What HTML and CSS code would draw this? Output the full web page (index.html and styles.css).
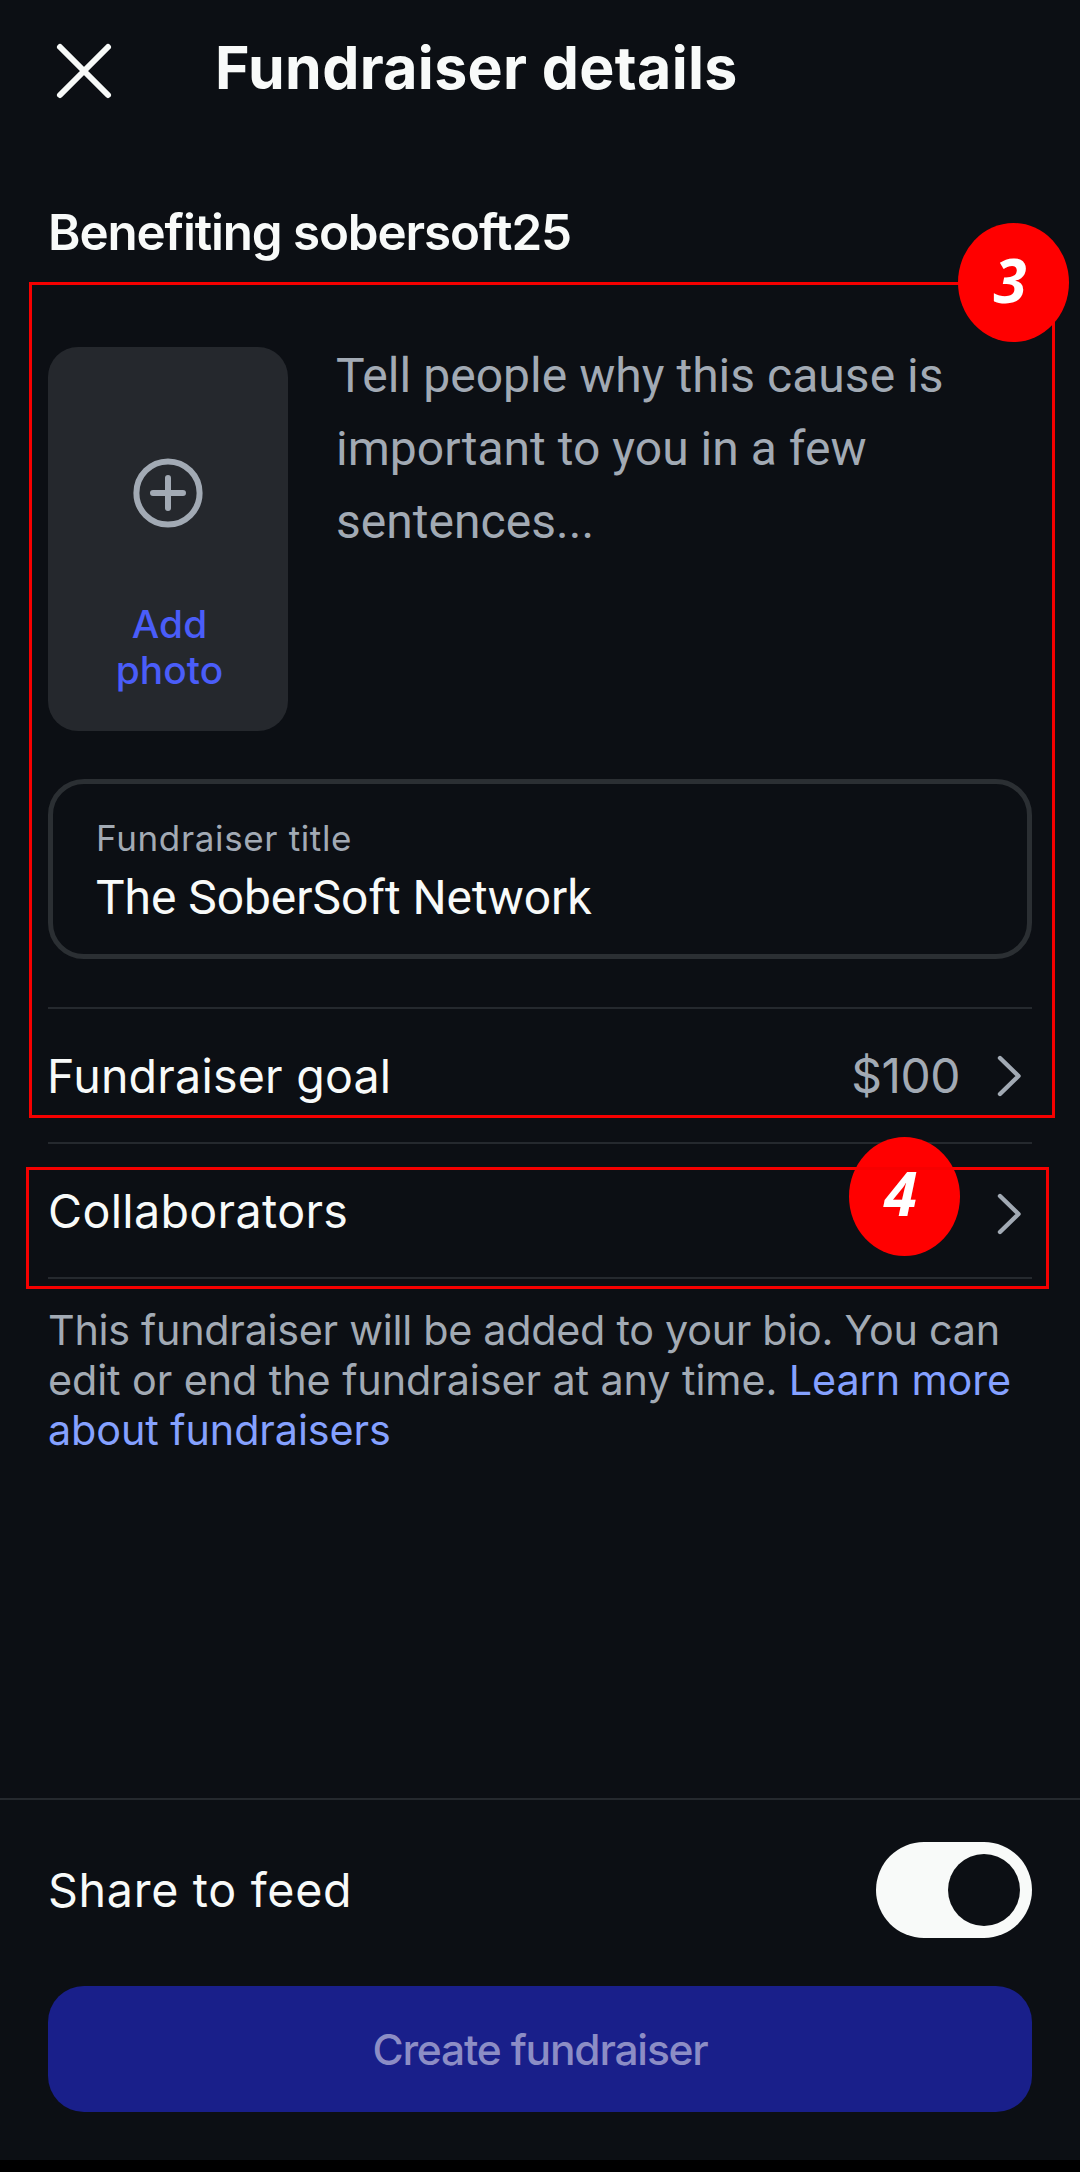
FILE: index.html
```
<!DOCTYPE html>
<html lang="en">
<head>
<meta charset="utf-8">
<title>Fundraiser details</title>
<link rel="stylesheet" href="styles.css">
</head>
<body>
<div class="screen">
  <header class="header">
    <svg class="close" viewBox="0 0 72 72" aria-label="Close"><path d="M12 12 60 60M60 12 12 60"/></svg>
    <h1 class="title">Fundraiser details</h1>
  </header>
  <main class="content">
    <h2 class="benefiting">Benefiting sobersoft25</h2>
    <section class="story">
      <div class="photo">
        <svg class="plus" viewBox="0 0 70 70"><circle cx="35" cy="35" r="31.6"/><path d="M35 20V50M20 35H50"/></svg>
        <span class="photo-label">Add<br>photo</span>
      </div>
      <p class="prompt">Tell people why this cause is<br>important to you in a few<br>sentences...</p>
    </section>
    <div class="field">
      <span class="field-label">Fundraiser title</span>
      <span class="field-value">The SoberSoft Network</span>
    </div>
    <div class="rows">
      <div class="row">
        <span class="row-label">Fundraiser goal</span>
        <span class="row-value">$100</span>
        <svg class="chevron" viewBox="0 0 48 48"><path d="M16 6 34.5 24 16 42"/></svg>
      </div>
      <div class="row">
        <span class="row-label collab">Collaborators</span>
        <svg class="chevron low" viewBox="0 0 48 48"><path d="M16 6 34.5 24 16 42"/></svg>
      </div>
    </div>
    <p class="note"><span class="note-lead">This fundraiser will be added to your bio. You can</span><br>edit or end the fundraiser at any time. <a class="link">Learn more<br>about fundraisers</a></p>
  </main>
  <footer class="footer">
    <div class="share">
      <span class="share-label">Share to feed</span>
      <span class="toggle"><span class="knob"></span></span>
    </div>
    <div class="button">Create fundraiser</div>
  </footer>
  <div class="navbar"></div>

  <div class="frame frame-3"></div>
  <div class="badge badge-3">3</div>
  <div class="badge badge-4">4</div>
  <div class="frame frame-4"></div>
</div>
</body>
</html>
```
FILE: styles.css
```
* { box-sizing: border-box; }
body { margin: 0; background: #0c0f14; }
h1, h2, p { margin: 0; }

.screen {
  position: relative;
  display: flex;
  flex-direction: column;
  width: 1080px;
  height: 2172px;
  overflow: hidden;
  background: #0c0f14;
  color: #f8faf9;
  font-family: Inter, "Liberation Sans", sans-serif;
  white-space: nowrap;
}
svg { flex: none; fill: none; stroke-linecap: round; stroke-linejoin: round; }

.header { display: flex; align-items: center; height: 142px; padding-left: 48px; }
.close { width: 72px; height: 72px; stroke: #f8faf9; stroke-width: 6; }
.title {
  margin-left: 95px;
  padding-bottom: 7px;
  font-size: 59px;
  line-height: 72px;
  font-weight: 650;
  letter-spacing: 0.35px;
}

.content { padding: 60px 48px 0; }
.benefiting { font-size: 49.3px; line-height: 60px; font-weight: 560; letter-spacing: -1.1px; }

.story { display: flex; gap: 48px; height: 384px; margin-top: 85px; }
.photo {
  display: flex;
  flex: none;
  flex-direction: column;
  align-items: center;
  gap: 73px;
  width: 240px;
  padding-top: 111px;
  border-radius: 30px;
  background: #25282d;
}
.plus { width: 70px; height: 70px; stroke: #a2aab4; stroke-width: 6; }
.photo-label {
  padding-left: 3px;
  color: #4a5df9;
  font-size: 38.8px;
  line-height: 46px;
  font-weight: 500;
  letter-spacing: 0.1px;
  text-align: center;
}
.prompt {
  margin-top: -8px;
  color: #a2aab4;
  font-family: Roboto, sans-serif;
  font-size: 48px;
  line-height: 73.2px;
  letter-spacing: 0.03px;
}

.field {
  display: flex;
  flex-direction: column;
  gap: 8px;
  height: 180px;
  margin-top: 48px;
  padding: 32px 43px 0;
  border: 5px solid #2b2f33;
  border-radius: 36px;
}
.field-label { color: #a2aab4; font-size: 35px; line-height: 44px; letter-spacing: 0.65px; }
.field-value { font-family: Roboto, sans-serif; font-size: 47.9px; line-height: 60px; }

.rows { margin-top: 48px; border-bottom: 2px solid #25292e; }
.row { display: flex; align-items: center; height: 135px; border-top: 2px solid #25292e; }
.row-label { flex: 1; margin-left: -1px; font-size: 46.6px; line-height: 60px; letter-spacing: 0.2px; }
.collab { margin-left: 0; letter-spacing: 0.35px; }
.row-value { margin-right: 24px; color: #a2aab4; font-size: 47.9px; line-height: 60px; letter-spacing: -0.5px; }
.chevron { width: 48px; height: 48px; stroke: #a2aab4; stroke-width: 4.4; }
.chevron.low { margin-top: 7px; }

.note { margin-top: 26px; color: #a2aab4; font-size: 41.3px; line-height: 50px; letter-spacing: -0.08px; }
.note-lead { letter-spacing: -0.28px; }
.link { color: #85a1ff; }

.footer { height: 362px; margin-top: auto; padding: 42px 48px 0; border-top: 2px solid #25292e; }
.share { display: flex; align-items: center; justify-content: space-between; height: 96px; }
.share-label { font-size: 46.6px; letter-spacing: 0.7px; }
.toggle {
  display: flex;
  align-items: center;
  justify-content: flex-end;
  width: 156px;
  height: 96px;
  padding-right: 12px;
  border-radius: 48px;
  background: #f8faf9;
}
.knob { width: 72px; height: 72px; border-radius: 50%; background: #0c0f14; }
.button {
  height: 126px;
  margin-top: 48px;
  border-radius: 36px;
  background: #191f8a;
  color: #8c8dc5;
  font-size: 42.5px;
  line-height: 127px;
  font-weight: 540;
  letter-spacing: -1.2px;
  text-align: center;
}
.navbar { height: 12px; background: #000; }

/* Step annotations laid over the screen */
.frame { position: absolute; border: 3px solid #f60000; }
.frame-3 { left: 29px; top: 282px; width: 1026px; height: 836px; }
.frame-4 { left: 26px; top: 1167px; width: 1023px; height: 122px; }
.badge {
  position: absolute;
  width: 111px;
  height: 119px;
  border-radius: 50%;
  background: #ff0000;
  color: #fff;
  font: italic 700 60px/119px "Open Sans", sans-serif;
  text-align: center;
}
.badge-3 { left: 958px; top: 223px; line-height: 114px; padding-right: 7px; }
.badge-4 { left: 849px; top: 1137px; line-height: 113px; padding-right: 8px; }
```
